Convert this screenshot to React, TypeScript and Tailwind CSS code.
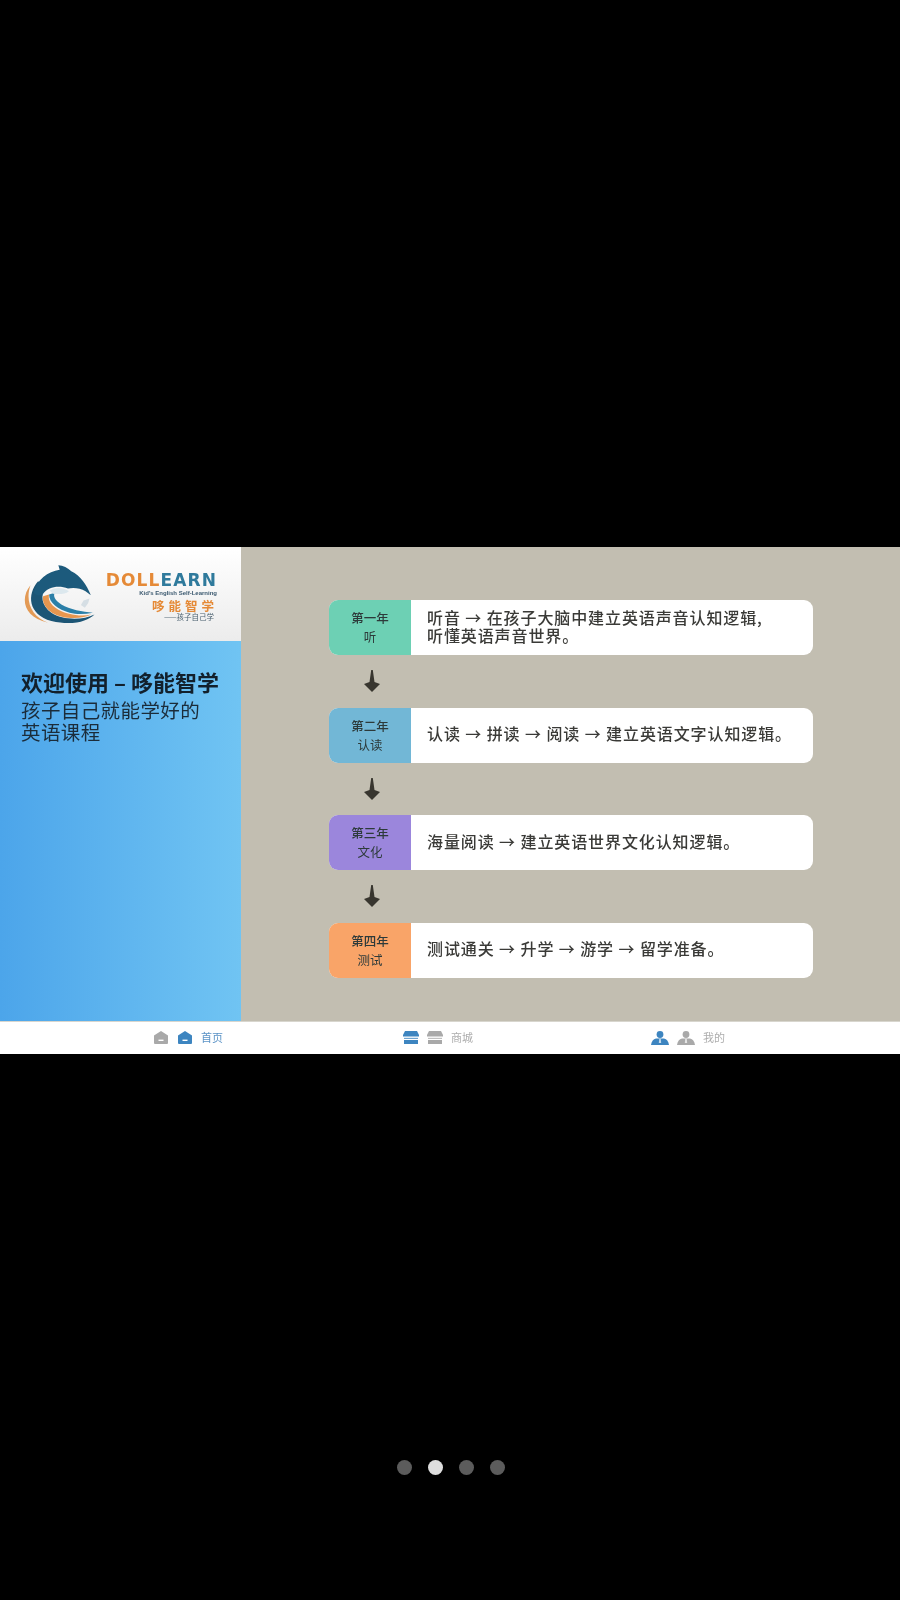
import React from 'react';

const cjk = { fontFamily: '"Noto Sans CJK SC", "Noto Sans", sans-serif' };

const steps = [
  { year: '第一年', name: '听', color: 'bg-[#6dd0b4]', lines: ['听音 → 在孩子大脑中建立英语声音认知逻辑,', '听懂英语声音世界。'] },
  { year: '第二年', name: '认读', color: 'bg-[#72b7d6]', lines: ['认读 → 拼读 → 阅读 → 建立英语文字认知逻辑。'] },
  { year: '第三年', name: '文化', color: 'bg-[#9b86dc]', lines: ['海量阅读 → 建立英语世界文化认知逻辑。'] },
  { year: '第四年', name: '测试', color: 'bg-[#f9a468]', lines: ['测试通关 → 升学 → 游学 → 留学准备。'] },
];

const DolphinLogo = () => (
  <svg viewBox="40 25 228 190" className="w-[76px] h-[63px] shrink-0">
    <path d="M62 92 C30 130 40 190 115 205 C65 188 45 140 62 92Z" fill="#e39a55" />
    <path d="M85 80 C50 120 55 180 125 200 C190 215 235 200 255 180 C220 198 160 198 125 175 C95 155 90 120 110 100Z" fill="#1c5575" />
    <path d="M100 125 C95 155 125 185 175 190 C205 193 230 188 245 180 C215 188 170 180 145 165 C120 150 115 135 118 120Z" fill="#e6964f" />
    <path d="M118 120 C118 145 145 165 180 175 C200 180 225 180 250 175 C220 172 180 165 155 150 C135 138 130 125 135 115Z" fill="#2a7fa8" />
    <path d="M72 115 C80 75 115 50 150 45 L146 32 C160 33 175 40 185 50 C212 62 232 92 244 122 L228 110 C212 100 190 98 175 102 C150 92 115 95 100 118 C90 125 80 125 72 115Z" fill="#1c5a7c" />
    <path d="M120 108 C140 95 165 100 178 110 C170 118 150 120 130 118Z" fill="#dce8ee" />
    <path d="M222 138 L240 132 L236 146 L226 160 L214 152Z" fill="#d5dee4" />
  </svg>
);

const Home = ({ className }: { className: string }) => (
  <svg viewBox="0 0 16 13" className={className} fill="currentColor">
    <path d="M8 0 L15 4.6 L15 12 Q15 13 14 13 L2 13 Q1 13 1 12 L1 4.6Z" />
    <rect x="5.5" y="8.6" width="5" height="1.4" fill="#fff" />
  </svg>
);

const Store = ({ className }: { className: string }) => (
  <svg viewBox="0 0 16 13" className={className} fill="currentColor">
    <path d="M2 0 H14 L16 4 V5.6 H0 V4Z" />
    <path d="M1 6.8 H15 V8 H1Z" opacity="0.75" />
    <path d="M1 9 H15 V13 H1Z" />
  </svg>
);

const Person = ({ className }: { className: string }) => (
  <svg viewBox="0 0 18 14" className={className} fill="currentColor">
    <circle cx="9" cy="3.5" r="3.4" />
    <path d="M5 7.6 H13 C15.8 8 17.4 10.4 18 14 H0 C0.6 10.4 2.2 8 5 7.6Z" />
    <path d="M8.2 8 H9.8 L10.2 12 H7.8Z" fill="#fff" opacity="0.7" />
  </svg>
);

const DownArrow = () => (
  <svg viewBox="0 0 16 22" className="w-[16px] h-[22px]">
    <path d="M7.2 0 H8.8 L10.5 12 L16 14 L8 22 L0 14 L5.5 12Z" fill="#38362f" />
  </svg>
);

export default function App() {
  return (
    <div style={cjk} className="bg-black w-[900px] h-[1600px] flex flex-col overflow-hidden">
      <div className="h-[547px]" />

      <div className="h-[507px] flex flex-col blur-[0.5px]">
        <div className="flex h-[474px]">
          <aside className="w-[241px] flex flex-col">
            <div className="h-[94px] flex items-center pl-[23px] gap-[9px] bg-gradient-to-b from-[#ffffff] to-[#ececec]">
              <DolphinLogo />
              <div className="flex flex-col items-end w-[109px] mt-[6px]">
                <div className="text-[17px] leading-[17px] font-black tracking-[1.1px] whitespace-nowrap" style={{ fontFamily: '"DejaVu Sans", sans-serif' }}>
                  <span className="text-[#e58a37]">DOLL</span>
                  <span className="text-[#2f7a9c]">EARN</span>
                </div>
                <div className="text-[6px] leading-[8px] font-bold text-[#3c5a70] whitespace-nowrap" style={{ fontFamily: '"Liberation Sans", sans-serif' }}>
                  Kid's English Self-Learning
                </div>
                <div className="mt-[2px] text-[12.5px] leading-[13px] font-bold text-[#e58a37] tracking-[4px] mr-[-1px] whitespace-nowrap">哆能智学</div>
                <div className="text-[7.5px] leading-[10px] text-[#4b6170] mr-[3px] whitespace-nowrap">——孩子自己学</div>
              </div>
            </div>
            <div className="flex-1 bg-gradient-to-r from-[#4ca5ea] to-[#70c4f3] pl-[21px] pt-[26px] text-[#12202c]">
              <h1 className="text-[22px] leading-[28px] font-bold whitespace-nowrap">
                欢迎使用<span className="mx-[5px]">–</span>哆能智学
              </h1>
              <p className="mt-[4px] text-[19.5px] leading-[21.5px] tracking-[0.4px] text-[#1b2c3a] whitespace-nowrap">孩子自己就能学好的</p>
              <p className="text-[19.5px] leading-[21.5px] tracking-[0.4px] text-[#1b2c3a]">英语课程</p>
            </div>
          </aside>

          <main className="flex-1 bg-[#c2beb1] pt-[53px] pl-[88px]">
            {steps.map((step, i) => (
              <div key={step.year}>
                <div className="w-[484px] h-[55px] flex rounded-[9px] overflow-hidden bg-white">
                  <div className={`w-[82px] shrink-0 flex flex-col items-center justify-center gap-[1px] text-[#2d3a3a] ${step.color}`}>
                    <span className="text-[12.5px] leading-[18px] font-medium">{step.year}</span>
                    <span className="text-[12.5px] leading-[18px]">{step.name}</span>
                  </div>
                  <div className="flex-1 flex flex-col justify-center pl-[16px] pb-[2px] text-[#3a3a37] text-[16px] leading-[17.5px] tracking-[0.9px] font-medium whitespace-nowrap">
                    {step.lines.map(line => (
                      <span key={line}>{line}</span>
                    ))}
                  </div>
                </div>
                {i < steps.length - 1 && (
                  <div className="h-[52.5px] pl-[35px] flex items-center">
                    <DownArrow />
                  </div>
                )}
              </div>
            ))}
          </main>
        </div>

        <nav className="h-[33px] flex bg-white border-t border-[#d8d6ce] pl-[63px] pb-[1px] text-[11px]">
          <div className="w-[250px] flex items-center justify-center gap-[8px]">
            <Home className="w-[16px] h-[13px] text-[#a9a9a9]" />
            <Home className="w-[16px] h-[13px] text-[#3d85c0]" />
            <span className="text-[#5b93c6]">首页</span>
          </div>
          <div className="w-[250px] flex items-center justify-center gap-[8px]">
            <Store className="w-[16px] h-[13px] text-[#3d85c0]" />
            <Store className="w-[16px] h-[13px] text-[#a9a9a9]" />
            <span className="text-[#adadad]">商城</span>
          </div>
          <div className="w-[250px] flex items-center justify-center gap-[8px]">
            <Person className="w-[18px] h-[14px] text-[#3d85c0]" />
            <Person className="w-[18px] h-[14px] text-[#a9a9a9]" />
            <span className="text-[#adadad]">我的</span>
          </div>
        </nav>
      </div>

      <div className="mt-[406px] flex justify-center gap-[16px] pl-[1px]">
        <span className="w-[15px] h-[15px] rounded-full bg-[#5c5c5c]" />
        <span className="w-[15px] h-[15px] rounded-full bg-[#dedede]" />
        <span className="w-[15px] h-[15px] rounded-full bg-[#5c5c5c]" />
        <span className="w-[15px] h-[15px] rounded-full bg-[#5c5c5c]" />
      </div>
    </div>
  );
}
